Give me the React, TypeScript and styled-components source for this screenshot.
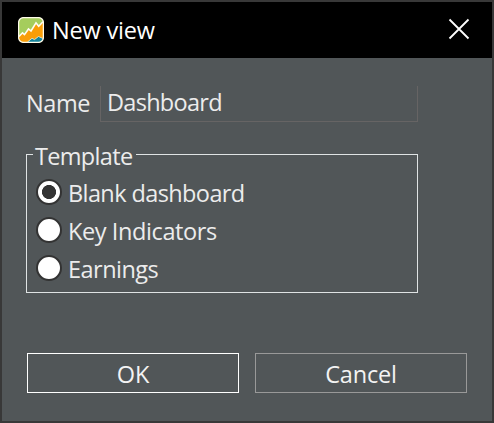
import React, { useState } from "react";
import styled, { createGlobalStyle } from "styled-components";

const GlobalStyle = createGlobalStyle`
  *, *::before, *::after { box-sizing: border-box; }
  body { margin: 0; background: #515658; }
`;

const Dialog = styled.div`
  display: flex;
  flex-direction: column;
  width: 494px;
  height: 423px;
  border: 2px solid #383838;
  background: #515658;
  color: #ececec;
  font: 400 23.5px/30px "Open Sans", "Noto Sans", sans-serif;
  white-space: nowrap;
`;

const TitleBar = styled.header`
  display: flex;
  align-items: center;
  height: 56px;
  padding: 0 22px 0 16px;
  background: #000;
  color: #fff;
`;

const Text = styled.span<{ $spacing?: number }>`
  letter-spacing: ${(p) => p.$spacing ?? 0}px;
`;

const Title = styled.h1`
  flex: 1;
  margin: 0 0 0 8px;
  font: inherit;
`;

const CloseButton = styled.button`
  display: flex;
  margin-top: -2px;
  padding: 0;
  border: 0;
  background: none;
`;

const Body = styled.main`
  display: flex;
  flex-direction: column;
  flex: 1;
  padding: 28px 24px 0;
`;

const NameRow = styled.label`
  display: flex;
  width: 392px;
  height: 36px;
`;

const NameLabel = styled.span`
  width: 74px;
  padding-top: 2px;
`;

const NameField = styled.span`
  flex: 1;
  padding: 1px 0 0 6px;
  border: solid #666464;
  border-width: 0 1px 1px;
`;

const Group = styled.section`
  width: 392px;
  height: 139px;
  margin-top: 32px;
  border: 1px solid #dfe3e4;
  border-top: 0;
`;

const Legend = styled.div`
  display: flex;
  height: 19px;
  margin: 0 -1px;
  line-height: 4px;

  &::before, &::after {
    content: "";
    height: 1px;
    background: #dfe3e4;
  }
  &::before { width: 7px; }
  &::after { flex: 1; }
`;

const LegendText = styled.span`
  width: 103px;
  padding-left: 2px;
`;

const Option = styled.div`
  display: flex;
  align-items: center;
  height: 38px;
  padding-left: 9px;
  gap: 6px;
  cursor: pointer;
`;

const OptionText = styled(Text)`
  padding-top: 2px;
`;

const Radio = styled.span<{ $checked: boolean }>`
  flex: none;
  width: 26px;
  height: 26px;
  border: 2px solid #333;
  border-radius: 50%;
  background: ${(p) =>
    p.$checked ? "radial-gradient(circle, #333 6.7px, #fff 7.4px)" : "#fff"};
`;

const Actions = styled.footer`
  display: grid;
  grid-template-columns: 212px 212px;
  gap: 16px;
  margin: 60px 0 0 1px;
`;

const Button = styled.button<{ $primary?: boolean }>`
  height: 40px;
  padding: 2px 0 0;
  border: 1px solid ${(p) => (p.$primary ? "#fff" : "#999")};
  background: transparent;
  color: #f3f3f3;
  font: inherit;
`;

const options = [
  { label: "Blank dashboard", spacing: -0.6 },
  { label: "Key Indicators", spacing: -0.4 },
  { label: "Earnings", spacing: -0.52 },
];

function AppIcon() {
  return (
    <svg width="26" height="26" viewBox="0 0 26 26">
      <rect x="0.6" y="0.6" width="24.8" height="24.8" rx="5" fill="#a5cd5c" />
      <path d="M1 19.5 4.5 15.8 6.5 17.6 10.5 12 13 14 18 5.8 20.7 9.3 25 4.7V21Q25 25 21 25H5Q1 25 1 21Z" fill="#f99d07" />
      <path d="M9.5 25 14 21.3 16.5 22.6 20.5 19.5 25 21.5Q25 25 21 25Z" fill="#14839b" />
      <path d="M1 19.5 4.5 15.8 6.5 17.6 10.5 12 13 14 18 5.8 20.7 9.3 25 4.7" fill="none" stroke="#fffdf0" strokeWidth="1.6" />
      <path d="M9.5 25 14 21.3 16.5 22.6 20.5 19.5 25 21.5" fill="none" stroke="#fffbe9" strokeWidth="0.7" />
      <rect x="0.6" y="0.6" width="24.8" height="24.8" rx="5" fill="none" stroke="#fffbe9" strokeWidth="1.3" />
    </svg>
  );
}

export default function App() {
  const [selected, setSelected] = useState(0);
  return (
    <>
      <GlobalStyle />
      <Dialog role="dialog">
        <TitleBar>
          <AppIcon />
          <Title><Text $spacing={-0.2}>New view</Text></Title>
          <CloseButton aria-label="Close">
            <svg width="22" height="22" viewBox="0 0 22 22">
              <path d="M1.5 1.5 20.5 20.5M20.5 1.5 1.5 20.5" stroke="#fff" strokeWidth="1.8" />
            </svg>
          </CloseButton>
        </TitleBar>
        <Body>
          <NameRow>
            <NameLabel><Text $spacing={-0.4}>Name</Text></NameLabel>
            <NameField><Text $spacing={-0.72}>Dashboard</Text></NameField>
          </NameRow>
          <Group role="radiogroup">
            <Legend><LegendText><Text $spacing={-0.68}>Template</Text></LegendText></Legend>
            {options.map((o, i) => (
              <Option key={o.label} role="radio" aria-checked={i === selected} onClick={() => setSelected(i)}>
                <Radio $checked={i === selected} />
                <OptionText $spacing={o.spacing}>{o.label}</OptionText>
              </Option>
            ))}
          </Group>
          <Actions>
            <Button $primary><Text>OK</Text></Button>
            <Button><Text $spacing={-0.2}>Cancel</Text></Button>
          </Actions>
        </Body>
      </Dialog>
    </>
  );
}
